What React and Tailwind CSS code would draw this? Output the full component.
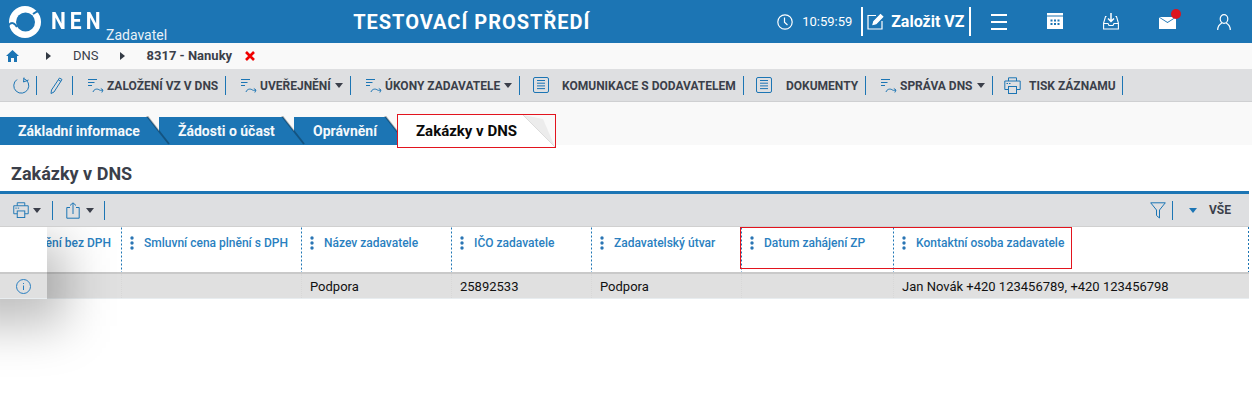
const BLUE = '#1c75b4'

function Logo() {
  return (
    <svg width="34" height="34" viewBox="0 0 34 34" className="ml-[8px] shrink-0">
      <circle cx="17" cy="17" r="16" fill="#fff" />
      <circle cx="17.5" cy="17" r="9.5" fill={BLUE} />
      <path d="M25 9 C29 6 31 6 34 5" stroke={BLUE} strokeWidth="2" fill="none" />
      <path d="M0 21 C3 17 6 17 9 22" stroke={BLUE} strokeWidth="2" fill="none" />
    </svg>
  )
}

function ClockIcon() {
  return (
    <svg width="16" height="16" viewBox="0 0 16 16" fill="none" stroke="#fff" strokeWidth="1.2">
      <circle cx="8" cy="8" r="7.2" />
      <path d="M7.5 3.5V8.3L10.5 11" />
    </svg>
  )
}

function EditIcon() {
  return (
    <svg width="17" height="17" viewBox="0 0 17 17" fill="none" stroke="#fff" strokeWidth="1.2">
      <path d="M9 2.5H1V16H15V8" />
      <path d="M6 11.5L6.8 8.5L13.5 1.5L15.8 3.8L9 10.7Z" fill="#fff" />
    </svg>
  )
}

function CalendarIcon() {
  return (
    <svg width="16" height="16" viewBox="0 0 16 16" className="mt-[-1px]">
      <path d="M0 0H16V2.5H0Z" fill="#fff" />
      <path d="M0 3.5H16V16H0Z" fill="#fff" />
      <g fill={BLUE}>
        <rect x="3.5" y="6.5" width="2" height="2" />
        <rect x="7" y="6.5" width="2" height="2" />
        <rect x="10.5" y="6.5" width="2" height="2" />
        <rect x="3.5" y="10" width="2" height="2" />
        <rect x="7" y="10" width="2" height="2" />
        <rect x="10.5" y="10" width="2" height="2" />
      </g>
    </svg>
  )
}

function InboxIcon() {
  return (
    <svg width="16" height="17" viewBox="0 0 16 17" fill="none" stroke="#fff" strokeWidth="1.1">
      <path d="M3.5 3.5H2.5L0.6 10V16H15.4V10L13.5 3.5H12.5" />
      <path d="M0.6 10.5H5L6 12.5H10L11 10.5H15.4" />
      <path d="M8 0V8M5 5.5L8 8.5L11 5.5" strokeWidth="1.5" />
    </svg>
  )
}

function MailIcon() {
  return (
    <svg width="17" height="12" viewBox="0 0 17 12">
      <path d="M0 0.5L8.5 6L17 0.5V12H0Z" fill="#fff" />
      <path d="M0.5 0H16.5L8.5 5Z" fill="#fff" />
    </svg>
  )
}

function UserIcon() {
  return (
    <svg width="14" height="16" viewBox="0 0 14 16" fill="none" stroke="#fff" strokeWidth="1.2">
      <ellipse cx="7" cy="5" rx="3.8" ry="4.3" />
      <path d="M0.7 16C0.7 12 3 10 4.8 9M13.3 16C13.3 12 11 10 9.2 9" />
    </svg>
  )
}

function FlowIcon() {
  return (
    <svg width="17" height="18" viewBox="0 0 17 18" fill="none" stroke={BLUE} strokeWidth="1" className="shrink-0">
      <path d="M1 3.5H10M1 6.5H7.5M1 9.5H5" />
      <path d="M6 16C7 13 10 12.5 12 13.7C13 14.4 14 14.6 15.5 14.2" />
      <path d="M13.8 12.5L16 14L14.8 16.5" />
    </svg>
  )
}

function DocIcon() {
  return (
    <svg width="16" height="16" viewBox="0 0 16 16" fill="none" stroke={BLUE} className="shrink-0">
      <rect x="0.5" y="0.5" width="15" height="15" rx="1.5" />
      <path d="M4 3.5H12M4 6.2H12M4 8.9H12M4 11.6H12" />
    </svg>
  )
}

function PrintIcon({ size = 17 }) {
  return (
    <svg width={size} height={size} viewBox="0 0 17 17" fill="none" stroke={BLUE} className="shrink-0">
      <path d="M4.5 4V0.8H12.5V4" />
      <path d="M4.5 12.5H0.8V4H16.2V12.5H12.5" />
      <rect x="4.5" y="9.5" width="8" height="7" />
      <path d="M2.5 6.5H4M5 6.5H6.5" />
    </svg>
  )
}

function Caret({ color = '#3b3f4a' }) {
  return <span className="shrink-0 w-0 h-0 border-x-[4px] border-x-transparent border-t-[5px]" style={{ borderTopColor: color }} />
}

function Sep() {
  return <span className="shrink-0 w-[1px] h-[19px] bg-[#1c75b4]" />
}

function ToolLabel({ children }) {
  return <span className="text-[12px] font-bold text-[#3b3f4a] whitespace-nowrap leading-none">{children}</span>
}

function Arrow() {
  return <span className="w-0 h-0 border-y-[4px] border-y-transparent border-l-[5px] border-l-[#333a44]" />
}

function Tab({ label, width, z, inset = 'pl-[19px]' }) {
  return (
    <div className={`relative h-[28px] shrink-0 ${z}`} style={{ width }}>
      <div className={`h-full bg-[#1c75b4] ${inset} flex items-center [clip-path:polygon(0_0,calc(100%-22px)_0,100%_100%,0_100%)]`}>
        <span className="text-[14px] font-bold text-[#f4f8fb] whitespace-nowrap">{label}</span>
      </div>
      <svg width="24" height="29" viewBox="0 0 24 29" className="absolute right-0 top-[-1px]">
        <path d="M1 0L23 28" stroke="#000" strokeOpacity="0.28" strokeWidth="2" />
      </svg>
    </div>
  )
}

function HeadCell({ label }) {
  return (
    <div className="bg-[linear-gradient(#1c75b4_50%,transparent_50%)] bg-[length:1px_4px] bg-repeat-y bg-left flex items-start pl-[9px] pt-[9px] h-full overflow-hidden">
      <svg width="4" height="14" viewBox="0 0 4 14" className="shrink-0">
        <circle cx="2" cy="2" r="1.7" fill="#2a75b4" />
        <circle cx="2" cy="7" r="1.7" fill="#2a75b4" />
        <circle cx="2" cy="12" r="1.7" fill="#2a75b4" />
      </svg>
      <span className="ml-[10px] text-[12px] font-medium leading-[14px] text-[#2a7fc0] whitespace-nowrap">{label}</span>
    </div>
  )
}

function BodyCell({ children }) {
  return (
    <div className="border-l border-dotted border-l-[#d8d8d8] pl-[8px] pt-[1px] h-full flex items-center text-[13px] text-[#111] whitespace-nowrap">
      {children}
    </div>
  )
}

export default function App() {
  return (
    <div className="w-[1252px] h-[404px] overflow-hidden bg-white flex flex-col font-['Roboto',sans-serif]">
      {/* top bar */}
      <header className="h-[43px] bg-[#1c75b4] flex items-center text-white shrink-0">
        <Logo />
        <span className="ml-[9px] mt-[-1px] text-[21px] font-bold leading-none tracking-[4px] w-[55px] scale-y-[1.15] origin-center">NEN</span>
        <span className="mt-[26px] text-[14px] leading-none text-[#e8f1f8]">Zadavatel</span>
        <span className="ml-[186px] text-[20px] font-bold tracking-[1px] whitespace-nowrap w-[237px]">TESTOVACÍ PROSTŘEDÍ</span>
        <span className="ml-[187px] flex"><ClockIcon /></span>
        <span className="ml-[9px] text-[13px] w-[50px]">10:59:59</span>
        <span className="ml-[9px] w-[2px] h-[29px] bg-white" />
        <span className="ml-[4px] flex"><EditIcon /></span>
        <span className="ml-[7px] text-[16px] font-bold whitespace-nowrap w-[74px]">Založit VZ</span>
        <span className="ml-[4px] w-[2px] h-[29px] bg-white" />
        <span className="ml-[20px] w-[16px] flex flex-col gap-[5px]">
          <span className="h-[2px] bg-white" />
          <span className="h-[2px] bg-white" />
          <span className="h-[2px] bg-white" />
        </span>
        <span className="ml-[40px] flex"><CalendarIcon /></span>
        <span className="ml-[40px] flex"><InboxIcon /></span>
        <span className="ml-[40px] relative flex mt-[3px]">
          <MailIcon />
          <span className="absolute right-[-5px] top-[-8px] w-[10px] h-[10px] rounded-full bg-[#dc141e]" />
        </span>
        <span className="ml-[41px] flex"><UserIcon /></span>
      </header>

      {/* breadcrumb */}
      <nav className="h-[26px] bg-[#f9f9f9] flex items-center shrink-0 text-[13px] text-[#3b3f4a]">
        <svg width="13" height="12" viewBox="0 0 13 12" className="ml-[6px]">
          <path d="M6.5 0L13 6H11V12H8V8H5V12H2V6H0Z" fill="#1c75b4" />
        </svg>
        <span className="ml-[27px] flex"><Arrow /></span>
        <span className="ml-[22px]">DNS</span>
        <span className="ml-[21px] flex"><Arrow /></span>
        <span className="ml-[22px] font-bold">8317 - Nanuky</span>
        <svg width="10" height="10" viewBox="0 0 10 10" className="ml-[13px]">
          <path d="M1 1L9 9M9 1L1 9" stroke="#f00000" strokeWidth="2.6" />
        </svg>
      </nav>

      {/* toolbar */}
      <div className="h-[33px] bg-[#dedfe1] border-b border-b-[#cfd0d2] flex items-center shrink-0">
        <svg width="17" height="17" viewBox="0 0 17 17" fill="none" stroke="#1c75b4" strokeWidth="1" className="ml-[13px]">
          <path d="M10.5 1.5A7.5 7.5 0 1 1 4 2.5" />
          <path d="M11 0.5L10.5 5L15.5 3" />
        </svg>
        <span className="ml-[6px] flex"><Sep /></span>
        <svg width="13" height="17" viewBox="0 0 13 17" fill="none" stroke="#1c75b4" strokeWidth="1" className="ml-[13px]">
          <path d="M9.5 1L12 2.5L4 15L1 16.5L1.5 13Z" />
          <path d="M8.5 3L11 4.5" />
        </svg>
        <span className="ml-[9px] flex"><Sep /></span>
        <span className="ml-[14px] flex"><FlowIcon /></span>
        <span className="ml-[3px] w-[111px]"><ToolLabel>ZALOŽENÍ VZ V DNS</ToolLabel></span>
        <span className="ml-[7px] flex"><Sep /></span>
        <span className="ml-[14px] flex"><FlowIcon /></span>
        <span className="ml-[3px] w-[71px]"><ToolLabel>UVEŘEJNĚNÍ</ToolLabel></span>
        <span className="ml-[4px] flex"><Caret /></span>
        <span className="ml-[7px] flex"><Sep /></span>
        <span className="ml-[14px] flex"><FlowIcon /></span>
        <span className="ml-[3px] w-[115px]"><ToolLabel>ÚKONY ZADAVATELE</ToolLabel></span>
        <span className="ml-[4px] flex"><Caret /></span>
        <span className="ml-[7px] flex"><Sep /></span>
        <span className="ml-[13px] flex"><DocIcon /></span>
        <span className="ml-[13px] w-[174px]"><ToolLabel>KOMUNIKACE S DODAVATELEM</ToolLabel></span>
        <span className="ml-[7px] flex"><Sep /></span>
        <span className="ml-[12px] flex"><DocIcon /></span>
        <span className="ml-[14px] w-[72px]"><ToolLabel>DOKUMENTY</ToolLabel></span>
        <span className="ml-[7px] flex"><Sep /></span>
        <span className="ml-[14px] flex"><FlowIcon /></span>
        <span className="ml-[3px] w-[73px]"><ToolLabel>SPRÁVA DNS</ToolLabel></span>
        <span className="ml-[4px] flex"><Caret /></span>
        <span className="ml-[7px] flex"><Sep /></span>
        <span className="ml-[11px] flex"><PrintIcon /></span>
        <span className="ml-[8px] w-[86px]"><ToolLabel>TISK ZÁZNAMU</ToolLabel></span>
        <span className="ml-[7px] flex"><Sep /></span>
      </div>

      {/* tabs */}
      <div className="h-[43px] bg-[#f9f9f9] flex items-end shrink-0">
        <Tab label="Základní informace" width={170} z="z-30" inset="pl-[18px]" />
        <Tab label="Žádosti o účast" width={146} z="z-20 ml-[-11px]" />
        <Tab label="Oprávnění" width={114} z="z-10 ml-[-11px]" />
        <div className="relative z-40 ml-[-11px] mb-[-3px] w-[159px] h-[34px] border border-[#e2141e] bg-[#f9f9f9] shrink-0">
          <div className="h-full bg-white pl-[18px] flex items-center [clip-path:polygon(0_0,calc(100%-31px)_0,100%_100%,0_100%)]">
            <span className="text-[15px] font-bold text-[#0a0a0a] whitespace-nowrap">Zakázky v DNS</span>
          </div>
          <svg width="32" height="32" viewBox="0 0 32 32" className="absolute right-0 top-0">
            <path d="M0 0L32 32L20 4Z" fill="#ececec" />
            <path d="M0 0L32 32" stroke="#dcdcdc" />
          </svg>
        </div>
      </div>

      {/* content */}
      <main className="flex-1 min-h-0 w-[1249px] flex flex-col">
        <div className="h-[49px] border-b-[3px] border-b-[#1c75b4] flex items-end pl-[11px] pb-[5px] shrink-0">
          <h1 className="text-[18px] font-bold leading-[24px] text-[#3b3f4a]">Zakázky v DNS</h1>
        </div>
        <div className="h-[33px] bg-[#dedfe1] border-b border-b-[#d0d0d0] flex items-center shrink-0">
          <span className="ml-[13px] flex"><PrintIcon size={16} /></span>
          <span className="ml-[4px] flex"><Caret /></span>
          <span className="ml-[11px] flex"><Sep /></span>
          <svg width="14" height="17" viewBox="0 0 14 17" fill="none" stroke="#1c75b4" strokeWidth="1" className="ml-[13px]">
            <path d="M4 5.5H0.8V16.2H13.2V5.5H10" />
            <path d="M7 12V1M4 3.5L7 0.8L10 3.5" />
          </svg>
          <span className="ml-[6px] flex"><Caret /></span>
          <span className="ml-[10px] flex"><Sep /></span>
          <svg width="16" height="17" viewBox="0 0 16 17" fill="none" stroke="#1c75b4" strokeWidth="1" className="ml-auto">
            <path d="M0.7 0.8H15.3L9.5 8V16L6.5 13.5V8Z" />
          </svg>
          <span className="ml-[6px] flex"><Sep /></span>
          <span className="ml-[16px] flex"><Caret color="#1c75b4" /></span>
          <span className="ml-[12px] mr-[18px] text-[12px] font-bold text-[#3b3f4a]">VŠE</span>
        </div>

        {/* table */}
        <div className="relative flex-1 min-h-0 overflow-hidden">
          <div className="grid grid-cols-[121px_180px_150px_140px_150px_152px_355px_1px] h-[47px] border-b-2 border-b-[#c9c9c9]">
            <div className="h-full flex justify-end pt-[9px] pr-[10px] text-[12px] font-medium leading-[14px] text-[#2a7fc0] whitespace-nowrap">plnění bez DPH</div>
            <HeadCell label="Smluvní cena plnění s DPH" />
            <HeadCell label="Název zadavatele" />
            <HeadCell label="IČO zadavatele" />
            <HeadCell label="Zadavatelský útvar" />
            <HeadCell label="Datum zahájení ZP" />
            <HeadCell label="Kontaktní osoba zadavatele" />
            <div className="bg-[linear-gradient(#1c75b4_50%,transparent_50%)] bg-[length:1px_4px] bg-repeat-y" />
          </div>
          <div className="grid grid-cols-[121px_180px_150px_140px_150px_152px_356px] h-[25px] bg-[#e0e0e0] border-b border-b-[#e8edf0]">
            <div />
            <BodyCell />
            <BodyCell>Podpora</BodyCell>
            <BodyCell>25892533</BodyCell>
            <BodyCell>Podpora</BodyCell>
            <BodyCell />
            <BodyCell>Jan Novák +420 123456789, +420 123456798</BodyCell>
          </div>

          {/* shadow of the frozen column */}
          <div className="absolute left-[-50px] top-[15px] w-[116px] h-[84px] bg-black/25 blur-[24px]" />

          {/* frozen first column */}
          <div className="absolute left-0 top-0 w-[47px] h-[72px] flex flex-col">
            <div className="h-[47px] bg-white border-b-2 border-b-[#c9c9c9]" />
            <div className="h-[25px] bg-[#e0e0e0] border-b border-b-[#e8edf0] flex items-center justify-center">
              <svg width="15" height="15" viewBox="0 0 15 15" fill="none" stroke="#2a7fc0">
                <circle cx="7.5" cy="7.5" r="7" />
                <path d="M7.5 6.5V11M7.5 4V5" />
              </svg>
            </div>
          </div>

          {/* highlight box */}
          <div className="absolute left-[740px] top-0 w-[332px] h-[42px] border border-[#e2141e]" />
        </div>
      </main>
    </div>
  )
}
